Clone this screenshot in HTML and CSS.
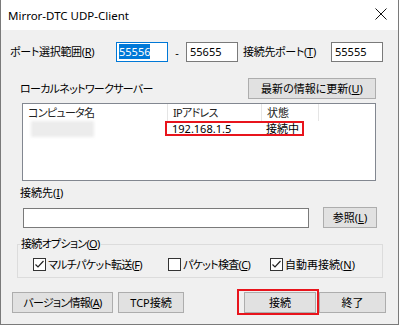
FILE: index.html
```html
<!DOCTYPE html>
<html lang="ja">
<head>
    <meta charset="UTF-8">
    <title>Mirror-DTC UDP-Client</title>
    <link rel="stylesheet" href="styles.css">
</head>
<body>
    <div class="window">
        <div class="titlebar">
            <span class="title">Mirror-DTC UDP-Client</span>
            <svg class="close" width="12" height="12" viewBox="0 0 12 12">
                <path d="M0.5 0.5 L11.5 11.5 M11.5 0.5 L0.5 11.5" stroke="#111" stroke-width="1" fill="none"/>
            </svg>
        </div>

        <div class="content">
            <div class="row ports">
                <span class="lbl range-lbl">ポート選択範囲(<u>R</u>)</span>
                <div class="field focus w-port"><span class="sel">55556</span></div>
                <span class="dash">-</span>
                <div class="field w-port">55655</div>
                <span class="lbl dest-lbl">接続先ポート(<u>T</u>)</span>
                <div class="field w-port">55555</div>
            </div>

            <div class="row servers">
                <span class="lbl kana">ローカルネットワークサーバー</span>
                <button class="btn refresh">最新の情報に更新(<u>U</u>)</button>
            </div>

            <div class="listview">
                <div class="lv-head">
                    <div class="col c1 kana">コンピュータ名</div>
                    <div class="col c2 kana">IPアドレス</div>
                    <div class="col c3">状態</div>
                    <div class="col c4"></div>
                </div>
                <div class="lv-row">
                    <div class="cell c1"><span class="blurred"></span></div>
                    <div class="cell c2">192.168.1.5</div>
                    <div class="cell c3">接続中</div>
                    <div class="mark row-mark"></div>
                </div>
            </div>

            <div class="lbl target-lbl">接続先(<u>I</u>)</div>
            <div class="row target">
                <div class="field w-target"></div>
                <button class="btn browse">参照(<u>L</u>)</button>
            </div>

            <fieldset class="group">
                <legend class="kana">接続オプション(<u>O</u>)</legend>
                <label class="check opt1 kana">
                    <svg class="box" width="13" height="13" viewBox="0 0 13 13">
                        <rect x="0.5" y="0.5" width="12" height="12" fill="#fff" stroke="#333"/>
                        <path d="M2.5 6.5 L5 9 L10.5 3" stroke="#222" stroke-width="1.2" fill="none"/>
                    </svg>
                    マルチパケット転送(<u>F</u>)
                </label>
                <label class="check opt2 kana">
                    <svg class="box" width="13" height="13" viewBox="0 0 13 13">
                        <rect x="0.5" y="0.5" width="12" height="12" fill="#fff" stroke="#333"/>
                    </svg>
                    パケット検査(<u>C</u>)
                </label>
                <label class="check">
                    <svg class="box" width="13" height="13" viewBox="0 0 13 13">
                        <rect x="0.5" y="0.5" width="12" height="12" fill="#fff" stroke="#333"/>
                        <path d="M2.5 6.5 L5 9 L10.5 3" stroke="#222" stroke-width="1.2" fill="none"/>
                    </svg>
                    自動再接続(<u>N</u>)
                </label>
            </fieldset>

            <div class="row buttons">
                <button class="btn b-version kana">バージョン情報(<u>A</u>)</button>
                <button class="btn b-tcp">TCP接続</button>
                <div class="spacer"></div>
                <div class="connect-wrap">
                    <button class="btn b-connect">接続</button>
                    <div class="mark btn-mark"></div>
                </div>
                <button class="btn b-exit">終了</button>
            </div>
        </div>
    </div>
</body>
</html>
```

FILE: styles.css
```css
body {
    margin: 0;
    background: #fff;
    font-family: "Noto Sans", "Noto Sans CJK JP", sans-serif;
    font-size: 11px;
    font-feature-settings: "palt";
    color: #000;
}
.window {
    width: 399px;
    height: 325px;
    box-sizing: border-box;
    border: 1px solid #7a7a7a;
    border-top: none;
    background: #f0f0f0;
    display: flex;
    flex-direction: column;
}
.titlebar {
    height: 30px;
    background: #fff;
    display: flex;
    align-items: center;
    padding-left: 7px;
    padding-right: 11px;
}
.title { flex: 1; font-size: 11.5px; }
.close { margin-top: -2px; }

.content { padding: 12px 0 0 9px; }
.row { display: flex; align-items: center; }
.lbl { white-space: nowrap; line-height: 14px; }
.kana { letter-spacing: -0.7px; }
u { text-decoration: underline; text-underline-offset: 1px; }

.field {
    box-sizing: border-box;
    height: 20px;
    background: #fff;
    border: 1px solid #7a7a7a;
    padding: 0 3px;
    line-height: 18px;
}
.field.focus { border-color: #0078d7; padding-left: 2px; }
.sel { background: #0078d7; color: #fff; display: inline-block; line-height: 15px; }
.w-port { width: 52px; }
.range-lbl { width: 106px; letter-spacing: -0.3px; }
.dash { width: 18px; text-align: center; }
.dest-lbl { margin-left: 5px; width: 88px; letter-spacing: -0.3px; }

.btn {
    box-sizing: border-box;
    height: 21px;
    background: #e1e1e1;
    border: 1px solid #adadad;
    font-family: inherit;
    font-size: 11px;
    font-feature-settings: "palt";
    padding: 0;
    color: #000;
    line-height: 18px;
}

.servers { margin-top: 16px; height: 21px; }
.servers .lbl { margin-left: 10px; width: 228px; }
.refresh { width: 128px; }

.listview {
    margin: 4px 0 0 12px;
    width: 354px;
    height: 78px;
    box-sizing: border-box;
    border: 1px solid #828790;
    background: #fff;
}
.lv-head { display: flex; height: 17px; }
.col {
    box-sizing: border-box;
    padding-left: 5px;
    line-height: 17px;
    border-right: 1px solid #e5e5e5;
    color: #222;
}
.c1 { width: 145px; }
.c2 { width: 94px; }
.c3 { width: 57px; }
.c4 { border-right: none; flex: 1; }
.lv-row { display: flex; height: 16px; line-height: 16px; position: relative; }
.cell { box-sizing: border-box; padding-left: 4px; }
.blurred {
    display: block;
    margin-left: 4px;
    width: 63px;
    height: 16px;
    background: #ececec;
    filter: blur(1.5px);
}
.mark { position: absolute; border: 2px solid #e8141c; box-sizing: border-box; }
.row-mark { left: 142px; top: 0; width: 139px; height: 15px; }

.target-lbl { margin: 5px 0 0 10px; }
.target { margin-top: 7px; height: 21px; }
.w-target { margin-left: 13px; width: 286px; }
.browse { margin-left: 14px; width: 54px; }

.group {
    margin: 9px 0 0 7px;
    width: 366px;
    height: 41px;
    box-sizing: border-box;
    border: 1px solid #dcdcdc;
    padding: 0 0 0 15px;
    display: flex;
    align-items: center;
}
.group legend { padding: 0 1px; margin-left: -13px; line-height: 14px; }
.check { display: flex; align-items: center; white-space: nowrap; }
.box { margin-right: 2px; }
.opt1 { width: 135px; }
.opt2 { width: 102px; }

.buttons { margin-top: 14px; height: 21px; }
.b-version { margin-left: 2px; width: 101px; }
.b-tcp { margin-left: 5px; width: 66px; }
.spacer { flex: 1; }
.connect-wrap { position: relative; }
.b-connect { width: 72px; }
.btn-mark { left: -7px; top: -3px; width: 82px; height: 26px; }
.b-exit { margin-left: 3px; width: 67px; margin-right: 12px; }
```
